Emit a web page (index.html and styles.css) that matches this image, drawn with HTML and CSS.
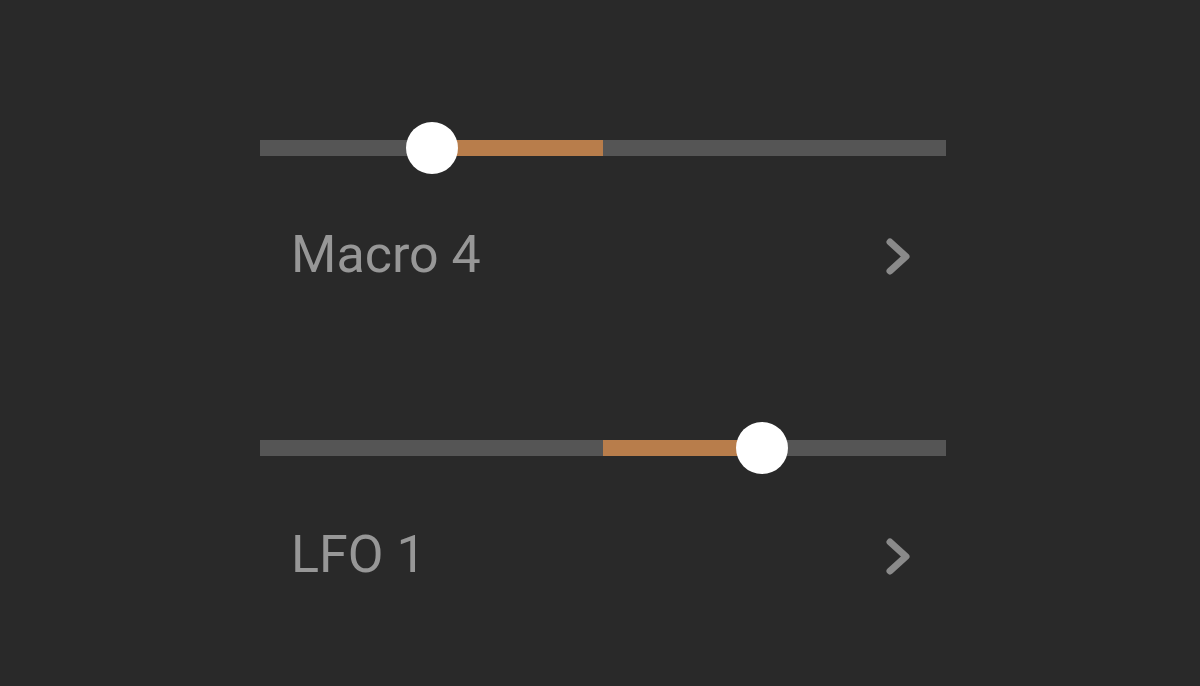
FILE: index.html
```html
<!DOCTYPE html>
<html lang="en">
<head>
  <meta charset="UTF-8">
  <meta name="viewport" content="width=device-width, initial-scale=1.0">
  <title>Modulation</title>
  <link rel="stylesheet" href="styles.css">
</head>
<body>
  <div class="panel">
    <div class="control">
      <div class="slider">
        <div class="track"></div>
        <div class="fill" style="left: 25%; width: 25%;"></div>
        <div class="thumb" style="left: 25%;"></div>
      </div>
      <div class="label-row">
        <span class="label">Macro 4</span>
        <svg class="chevron" width="24" height="37" viewBox="0 0 24 37">
          <path d="M4 4 L20 18.5 L4 33" />
        </svg>
      </div>
    </div>

    <div class="control">
      <div class="slider">
        <div class="track"></div>
        <div class="fill" style="left: 50%; width: 23.25%;"></div>
        <div class="thumb" style="left: 73.25%;"></div>
      </div>
      <div class="label-row">
        <span class="label">LFO 1</span>
        <svg class="chevron" width="24" height="37" viewBox="0 0 24 37">
          <path d="M4 4 L20 18.5 L4 33" />
        </svg>
      </div>
    </div>
  </div>
</body>
</html>
```

FILE: styles.css
```css
:root {
  --bg-color: #292929;
  --track-color: #555555;
  --fill-color: #b87d4b;
  --text-color: #979797;
  --icon-color: #8a8a8a;
}

body {
  margin: 0;
  padding: 0;
  background-color: var(--bg-color);
  font-family: Roboto, "Noto Sans", Arial, sans-serif;
  overflow: hidden;
}

.panel {
  width: 686px;
  margin-left: 260px;
  padding-top: 122px;
  display: flex;
  flex-direction: column;
  gap: 137px;
}

.control {
  display: flex;
  flex-direction: column;
}

/* slider */
.slider {
  position: relative;
  height: 52px;
  display: flex;
  align-items: center;
}

.track {
  width: 100%;
  height: 16px;
  background-color: var(--track-color);
}

.fill {
  position: absolute;
  top: 18px;
  height: 16px;
  background-color: var(--fill-color);
}

.thumb {
  position: absolute;
  top: 0;
  width: 52px;
  height: 52px;
  margin-left: -26px;
  border-radius: 50%;
  background-color: #fff;
}

/* label */
.label-row {
  margin-top: 51px;
  height: 60px;
  padding: 0 36px 0 31px;
  display: flex;
  align-items: center;
  justify-content: space-between;
}

.label {
  font-size: 52px;
  line-height: 60px;
  color: var(--text-color);
}

.chevron {
  margin-top: 2px;
}

.chevron path {
  fill: none;
  stroke: var(--icon-color);
  stroke-width: 7;
  stroke-linecap: round;
  stroke-linejoin: round;
}
```
